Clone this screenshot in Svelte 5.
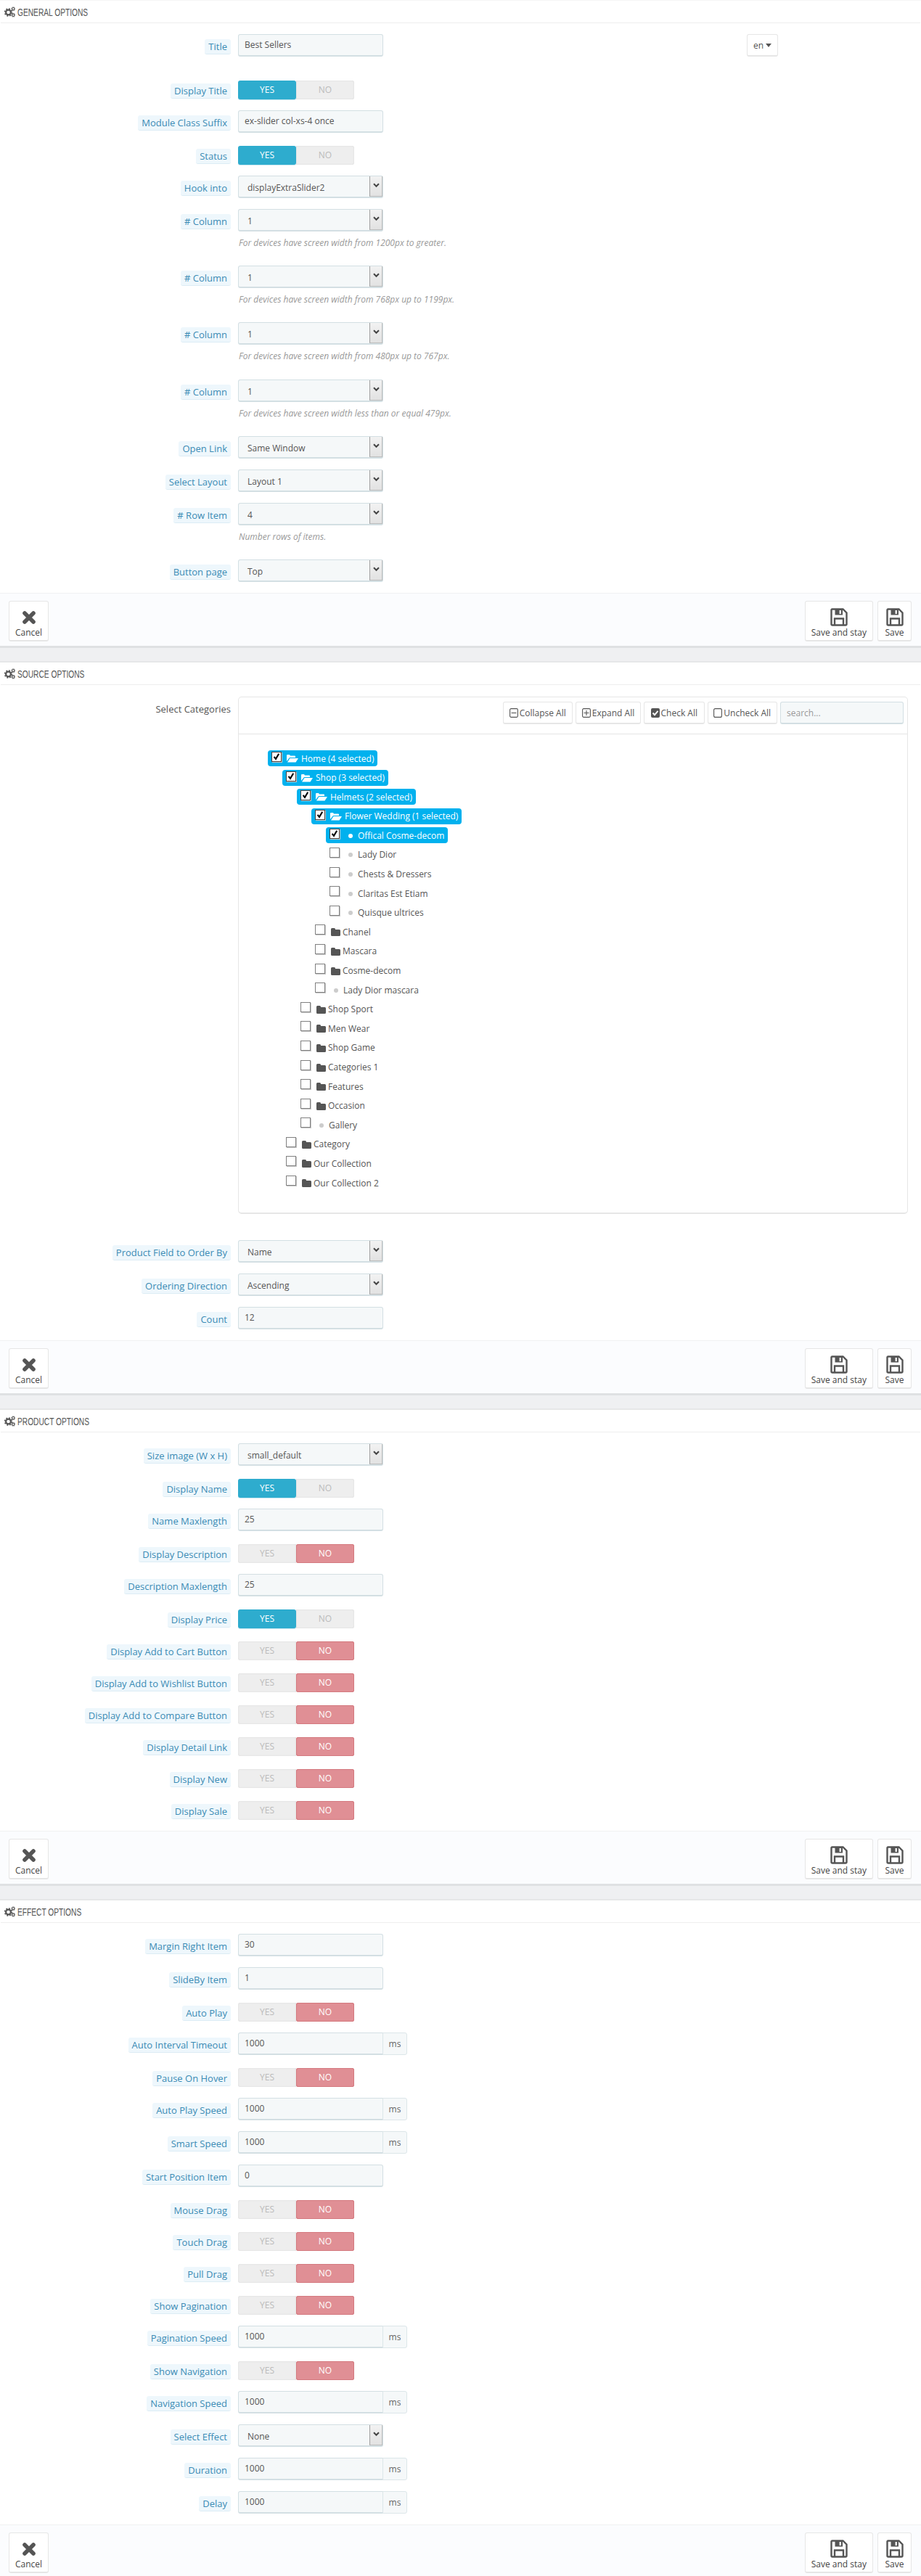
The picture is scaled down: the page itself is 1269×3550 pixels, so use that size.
<script>
  const general = [
    { t: 'input', label: 'Title', value: 'Best Sellers', cls: 'r-title', lang: true },
    { t: 'switch', label: 'Display Title', on: true },
    { t: 'input', label: 'Module Class Suffix', value: 'ex-slider col-xs-4 once' },
    { t: 'switch', label: 'Status', on: true },
    { t: 'select', label: 'Hook into', value: 'displayExtraSlider2' },
    { t: 'select', label: '# Column', value: '1', help: 'For devices have screen width from 1200px to greater.' },
    { t: 'select', label: '# Column', value: '1', help: 'For devices have screen width from 768px up to 1199px.' },
    { t: 'select', label: '# Column', value: '1', help: 'For devices have screen width from 480px up to 767px.' },
    { t: 'select', label: '# Column', value: '1', help: 'For devices have screen width less than or equal 479px.' },
    { t: 'select', label: 'Open Link', value: 'Same Window' },
    { t: 'select', label: 'Select Layout', value: 'Layout 1' },
    { t: 'select', label: '# Row Item', value: '4', help: 'Number rows of items.' },
    { t: 'select', label: 'Button page', value: 'Top' }
  ];
  const sourceAfter = [
    { t: 'select', label: 'Product Field to Order By', value: 'Name' },
    { t: 'select', label: 'Ordering Direction', value: 'Ascending' },
    { t: 'input', label: 'Count', value: '12' }
  ];
  const product = [
    { t: 'select', label: 'Size image (W x H)', value: 'small_default' },
    { t: 'switch', label: 'Display Name', on: true },
    { t: 'input', label: 'Name Maxlength', value: '25' },
    { t: 'switch', label: 'Display Description', on: false },
    { t: 'input', label: 'Description Maxlength', value: '25' },
    { t: 'switch', label: 'Display Price', on: true },
    { t: 'switch', label: 'Display Add to Cart Button', on: false },
    { t: 'switch', label: 'Display Add to Wishlist Button', on: false },
    { t: 'switch', label: 'Display Add to Compare Button', on: false },
    { t: 'switch', label: 'Display Detail Link', on: false },
    { t: 'switch', label: 'Display New', on: false },
    { t: 'switch', label: 'Display Sale', on: false }
  ];
  const effect = [
    { t: 'input', label: 'Margin Right Item', value: '30' },
    { t: 'input', label: 'SlideBy Item', value: '1' },
    { t: 'switch', label: 'Auto Play', on: false },
    { t: 'input', label: 'Auto Interval Timeout', value: '1000', unit: 'ms' },
    { t: 'switch', label: 'Pause On Hover', on: false },
    { t: 'input', label: 'Auto Play Speed', value: '1000', unit: 'ms' },
    { t: 'input', label: 'Smart Speed', value: '1000', unit: 'ms' },
    { t: 'input', label: 'Start Position Item', value: '0' },
    { t: 'switch', label: 'Mouse Drag', on: false },
    { t: 'switch', label: 'Touch Drag', on: false },
    { t: 'switch', label: 'Pull Drag', on: false },
    { t: 'switch', label: 'Show Pagination', on: false },
    { t: 'input', label: 'Pagination Speed', value: '1000', unit: 'ms' },
    { t: 'switch', label: 'Show Navigation', on: false },
    { t: 'input', label: 'Navigation Speed', value: '1000', unit: 'ms' },
    { t: 'select', label: 'Select Effect', value: 'None' },
    { t: 'input', label: 'Duration', value: '1000', unit: 'ms' },
    { t: 'input', label: 'Delay', value: '1000', unit: 'ms' }
  ];
  const tree = [
    { l: 0, n: 'Home (4 selected)', k: 'open', s: true },
    { l: 1, n: 'Shop (3 selected)', k: 'open', s: true },
    { l: 2, n: 'Helmets (2 selected)', k: 'open', s: true },
    { l: 3, n: 'Flower Wedding (1 selected)', k: 'open', s: true },
    { l: 4, n: 'Offical Cosme-decom', k: 'leaf', s: true },
    { l: 4, n: 'Lady Dior', k: 'leaf' },
    { l: 4, n: 'Chests & Dressers', k: 'leaf' },
    { l: 4, n: 'Claritas Est Etiam', k: 'leaf' },
    { l: 4, n: 'Quisque ultrices', k: 'leaf' },
    { l: 3, n: 'Chanel', k: 'folder' },
    { l: 3, n: 'Mascara', k: 'folder' },
    { l: 3, n: 'Cosme-decom', k: 'folder' },
    { l: 3, n: 'Lady Dior mascara', k: 'leaf' },
    { l: 2, n: 'Shop Sport', k: 'folder' },
    { l: 2, n: 'Men Wear', k: 'folder' },
    { l: 2, n: 'Shop Game', k: 'folder' },
    { l: 2, n: 'Categories 1', k: 'folder' },
    { l: 2, n: 'Features', k: 'folder' },
    { l: 2, n: 'Occasion', k: 'folder' },
    { l: 2, n: 'Gallery', k: 'leaf' },
    { l: 1, n: 'Category', k: 'folder' },
    { l: 1, n: 'Our Collection', k: 'folder' },
    { l: 1, n: 'Our Collection 2', k: 'folder' }
  ];
  const levelX = [0, 20, 40, 60, 80];
</script>

{#snippet cogs()}
  <svg class="cogs" viewBox="0 0 15 15" width="15" height="15" aria-hidden="true">
    <circle cx="5.5" cy="8" r="3.4" fill="none" stroke="#555" stroke-width="2.2" />
    <circle cx="5.5" cy="8" r="5" fill="none" stroke="#555" stroke-width="1.6" stroke-dasharray="2 1.93" />
    <circle cx="12.3" cy="3.2" r="1.7" fill="none" stroke="#555" stroke-width="1.2" />
    <circle cx="12.3" cy="3.2" r="2.6" fill="none" stroke="#555" stroke-width=".8" stroke-dasharray="1 1.04" />
    <circle cx="12.3" cy="11.8" r="1.7" fill="none" stroke="#555" stroke-width="1.2" />
    <circle cx="12.3" cy="11.8" r="2.6" fill="none" stroke="#555" stroke-width=".8" stroke-dasharray="1 1.04" />
  </svg>
{/snippet}

{#snippet floppy()}
  <svg viewBox="0 0 24 25" width="24" height="25" aria-hidden="true">
    <path d="M2.5 1.5H17.5L22.5 6.5V22a1.5 1.5 0 0 1-1.5 1.5H3A1.5 1.5 0 0 1 1.5 22V2.5a1 1 0 0 1 1-1z" fill="none" stroke="#555" stroke-width="2.4" />
    <path d="M6.5 1.5h10.5v8H6.5z" fill="#555" />
    <rect x="12.6" y="3" width="2.2" height="5" fill="#fff" />
    <path d="M6 23.5V14.5H18V23.5" fill="none" stroke="#555" stroke-width="2.4" />
  </svg>
{/snippet}

{#snippet heading(text)}
  <h3 class="head">{@render cogs()}<span class="ttl">{text}</span></h3>
{/snippet}

{#snippet row(r)}
  <div class="row r-{r.t} {r.cls ?? ''}" class:has-help={r.help}>
    <div class="lab"><span class="pill">{r.label}</span></div>
    <div class="ctl">
      {#if r.t === 'input'}
        <div class="line">
          <div class="field" class:joined={r.unit}>{r.value}</div>
          {#if r.unit}<div class="unit">{r.unit}</div>{/if}
          {#if r.lang}<div class="lang">en<i class="caret"></i></div>{/if}
        </div>
      {:else if r.t === 'switch'}
        <div class="switch">
          <span class="seg yes" class:active={r.on}>YES</span>
          <span class="seg no" class:active={!r.on}>NO</span>
        </div>
      {:else}
        <div class="select">
          <span class="val">{r.value}</span>
          <span class="arrow">
            <svg viewBox="0 0 9 7" width="9" height="7" aria-hidden="true"><path d="M1 1.2L4.5 4.8L8 1.2" fill="none" stroke="#444" stroke-width="2" /></svg>
          </span>
        </div>
      {/if}
      {#if r.help}<p class="help">{r.help}</p>{/if}
    </div>
  </div>
{/snippet}

{#snippet footer()}
  <div class="footer">
    <button class="act">
      <span class="ico">
        <svg viewBox="0 0 20 20" width="20" height="20" aria-hidden="true"><path d="M4 4L16 16M16 4L4 16" stroke="#555" stroke-width="5.6" stroke-linecap="round" /></svg>
      </span>
      <span>Cancel</span>
    </button>
    <div class="right">
      <button class="act"><span class="ico">{@render floppy()}</span><span>Save and stay</span></button>
      <button class="act save"><span class="ico">{@render floppy()}</span><span>Save</span></button>
    </div>
  </div>
{/snippet}

<div class="page">
  <section class="sec first">
    {@render heading('GENERAL OPTIONS')}
    <div class="body">
      {#each general as r}{@render row(r)}{/each}
    </div>
    {@render footer()}
  </section>

  <section class="sec">
    {@render heading('SOURCE OPTIONS')}
    <div class="body">
      <div class="row r-tree">
        <div class="lab"><span class="plain">Select Categories</span></div>
        <div class="tree">
          <div class="toolbar">
            <button class="tbtn w-collapse">
              <svg viewBox="0 0 12 13" width="12" height="13" aria-hidden="true"><rect x=".6" y=".6" width="10.8" height="11.8" rx="1.6" fill="none" stroke="#555" stroke-width="1.1" /><path d="M2.5 6.5h7" stroke="#555" stroke-width="1.1" /></svg>
              Collapse All
            </button>
            <button class="tbtn w-expand">
              <svg viewBox="0 0 12 13" width="12" height="13" aria-hidden="true"><rect x=".6" y=".6" width="10.8" height="11.8" rx="1.6" fill="none" stroke="#555" stroke-width="1.1" /><path d="M2.5 6.5h7M6 3v7" stroke="#555" stroke-width="1.1" /></svg>
              Expand All
            </button>
            <button class="tbtn w-check">
              <svg viewBox="0 0 12 13" width="12" height="13" aria-hidden="true"><rect width="12" height="13" rx="2" fill="#555" /><path d="M2.5 6.5L5 9.2L9.5 3.8" fill="none" stroke="#fff" stroke-width="1.9" /></svg>
              Check All
            </button>
            <button class="tbtn w-uncheck">
              <svg viewBox="0 0 12 13" width="12" height="13" aria-hidden="true"><rect x=".6" y=".6" width="10.8" height="11.8" rx="2" fill="none" stroke="#555" stroke-width="1.1" /></svg>
              Uncheck All
            </button>
            <div class="search">search...</div>
          </div>
          <ul class="nodes">
            {#each tree as n}
              <li>
                <div class="node" class:sel={n.s} style={`margin-left:${levelX[n.l]}px`}>
                  <span class="cb" class:on={n.s}>
                    {#if n.s}
                      <svg viewBox="0 0 12 12" width="12" height="12" aria-hidden="true"><path d="M2.6 5.8L5 8.8L9.2 1.8" fill="none" stroke="#000" stroke-width="2.1" /></svg>
                    {/if}
                  </span>
                  {#if n.k === 'open'}
                    <svg class="fi open" viewBox="0 0 16 12" width="16" height="12" aria-hidden="true"><path d="M0 10V2a1 1 0 0 1 1-1h3l1 1.5h6a1 1 0 0 1 1 1V5H4L0 10zM1 11.5L4.5 6H16L12.5 11.5z" fill="#fff" /></svg>
                  {:else if n.k === 'folder'}
                    <svg class="fi closed" viewBox="0 0 13 12" width="13" height="12" aria-hidden="true"><path d="M0 2.5A1.5 1.5 0 0 1 1.5 1h3A1.5 1.5 0 0 1 6 2.5V3h5.5A1.5 1.5 0 0 1 13 4.5v6A1.5 1.5 0 0 1 11.5 12h-10A1.5 1.5 0 0 1 0 10.5z" fill="#555" /></svg>
                  {:else}
                    <i class="dot"></i>
                  {/if}
                  <span class="nm">{n.n}</span>
                </div>
              </li>
            {/each}
          </ul>
        </div>
      </div>
      {#each sourceAfter as r}{@render row(r)}{/each}
    </div>
    {@render footer()}
  </section>

  <section class="sec">
    {@render heading('PRODUCT OPTIONS')}
    <div class="body">
      {#each product as r}{@render row(r)}{/each}
    </div>
    {@render footer()}
  </section>

  <section class="sec">
    {@render heading('EFFECT OPTIONS')}
    <div class="body">
      {#each effect as r}{@render row(r)}{/each}
    </div>
    {@render footer()}
  </section>
</div>

<style>
  :global(body) {
    margin: 0;
    background: #fff;
  }
  .page {
    height: 3550px;
    overflow: hidden;
    font-family: "Open Sans", "Liberation Sans", sans-serif;
    font-size: 12px;
    line-height: 17px;
    color: #555;
  }
  .sec {
    border-top: 2px solid #e6e7e8;
  }
  .sec.first {
    border-top: 1px solid #f5f5f5;
  }
  .head {
    height: 30px;
    margin: 0 1px;
    padding-left: 5px;
    display: flex;
    align-items: center;
    gap: 3px;
    border-bottom: 1px solid #eeeeee;
    font-family: "Liberation Sans", sans-serif;
    font-size: 15px;
    font-weight: 400;
    color: #555;
  }
  .ttl {
    display: inline-block;
    white-space: nowrap;
    transform: scaleX(0.68);
    transform-origin: left center;
  }
  .body {
    padding-top: 15px;
  }
  .sec:not(.first) .body {
    padding-top: 16px;
  }
  .sec:nth-child(n + 3) .body {
    padding-top: 15px;
  }
  .row {
    display: flex;
    gap: 10px;
  }
  .r-input,
  .r-select {
    height: 46px;
  }
  .r-switch {
    height: 44px;
  }
  .r-title {
    height: 60.75px;
  }
  .has-help {
    height: 78.25px;
  }
  .r-tree {
    height: 749px;
  }
  .lab {
    width: 318px;
    flex: none;
    display: flex;
    justify-content: flex-end;
    align-items: flex-start;
  }
  .pill {
    margin-top: 7px;
    padding: 1px 5px;
    height: 18px;
    border-bottom: 1px solid #dcecf5;
    border-radius: 3px;
    background: #eef7fc;
    color: #3a8bb5;
    font-size: 13px;
    line-height: 18px;
    white-space: nowrap;
  }
  .plain {
    margin-top: 8px;
    color: #555;
    font-size: 13px;
    line-height: 18px;
  }
  .ctl {
    flex: 1;
    min-width: 0;
  }
  .line {
    display: flex;
  }
  .field {
    box-sizing: border-box;
    width: 200px;
    height: 31px;
    padding: 0 8px;
    border: 1px solid #d3dfe3;
    border-bottom-width: 2px;
    border-radius: 3px;
    background: #f5f8f9;
    line-height: 28px;
    color: #555;
  }
  .field.joined {
    border-radius: 3px 0 0 3px;
  }
  .unit {
    box-sizing: border-box;
    width: 34px;
    height: 31px;
    margin-left: -1px;
    border: 1px solid #dce6e9;
    border-radius: 0 3px 3px 0;
    background: #f5f8f9;
    text-align: center;
    line-height: 29px;
    color: #666;
  }
  .lang {
    box-sizing: border-box;
    width: 43px;
    height: 31px;
    margin-left: 501px;
    padding-left: 8px;
    display: flex;
    align-items: center;
    gap: 3px;
    border: 1px solid #e6e6e6;
    border-bottom-width: 2px;
    border-radius: 3px;
    background: #fff;
  }
  .caret {
    width: 0;
    height: 0;
    border-left: 4px solid transparent;
    border-right: 4px solid transparent;
    border-top: 5px solid #555;
  }
  .switch {
    margin-top: 3px;
    width: 160px;
    height: 26px;
    display: flex;
  }
  .seg {
    flex: 1;
    text-align: center;
    line-height: 25px;
    background: #eee;
    color: #bbb;
    box-shadow: inset 0 0 2px #d4d4d4;
  }
  .seg.yes {
    border-radius: 3px 0 0 3px;
  }
  .seg.no {
    border-radius: 0 3px 3px 0;
  }
  .seg.yes.active {
    background: #2eacce;
    color: #fff;
    box-shadow: 0 1px 0 #c9e6ef;
    border-radius: 3px;
  }
  .seg.no.active {
    background: #e08f95;
    color: #fff;
    box-shadow: inset 0 0 0 1px #d4797f;
    border-radius: 3px;
  }
  .select {
    box-sizing: border-box;
    width: 200px;
    height: 31px;
    position: relative;
    padding: 0 0 0 12px;
    border: 1px solid #d3dfe3;
    border-bottom-width: 2px;
    border-radius: 3px;
    background: #f5f8f9;
    line-height: 31px;
    color: #555;
  }
  .arrow {
    position: absolute;
    top: 0;
    right: 0;
    bottom: 0;
    box-sizing: border-box;
    width: 18px;
    display: flex;
    justify-content: center;
    padding-top: 9px;
    border-left: 1px solid #a0a0a0;
    border-right: 1px solid #bdbdbd;
    border-bottom: 1px solid #bdbdbd;
    background: linear-gradient(#f2f2f2, #e2e2e2);
  }
  .arrow svg {
    display: block;
  }
  .help {
    margin: 7px 0 0 1px;
    font-style: italic;
    color: #999;
    white-space: nowrap;
  }
  .footer {
    box-sizing: border-box;
    height: 76px;
    padding: 10px 13px 0 12px;
    display: flex;
    justify-content: space-between;
    border-top: 1px solid #f0f1f2;
    border-bottom: 3px solid #dfe1e3;
    background: #fbfcfe;
    margin-bottom: 18px;
    box-shadow: 0 18px 0 #eff0f2;
  }
  .right {
    display: flex;
    gap: 6px;
  }
  .act {
    box-sizing: border-box;
    height: 56px;
    min-width: 47px;
    padding: 9px 8px 0;
    display: flex;
    flex-direction: column;
    align-items: center;
    border: 1px solid #e6e6e6;
    border-bottom-width: 2px;
    border-radius: 3px;
    background: #fff;
    font: inherit;
    line-height: 16px;
    color: #444;
  }
  .ico {
    height: 25px;
    display: flex;
    align-items: center;
    margin-bottom: 1px;
  }
  .tree {
    box-sizing: border-box;
    width: 923px;
    height: 713px;
    border: 1px solid #e6e6e6;
    border-bottom-width: 2px;
    border-radius: 5px;
    background: #fff;
  }
  .toolbar {
    box-sizing: border-box;
    height: 51px;
    padding: 6px 5px 0 0;
    display: flex;
    justify-content: flex-end;
    gap: 4px;
    border-bottom: 1px solid #e6e6e6;
  }
  .tbtn {
    box-sizing: border-box;
    height: 31px;
    padding: 0;
    display: flex;
    align-items: center;
    justify-content: center;
    gap: 2px;
    border: 1px solid #e6e6e6;
    border-bottom-width: 2px;
    border-radius: 3px;
    background: #fff;
    font: inherit;
    color: #555;
    white-space: nowrap;
  }
  .w-collapse {
    width: 96.5px;
  }
  .w-expand {
    width: 90px;
  }
  .w-check {
    width: 83.5px;
  }
  .w-uncheck {
    width: 96.5px;
  }
  .search {
    box-sizing: border-box;
    width: 170px;
    height: 31px;
    padding-left: 8px;
    border: 1px solid #d3dfe3;
    border-bottom-width: 2px;
    border-radius: 3px;
    background: #f5f8f9;
    line-height: 30px;
    color: #999;
  }
  .nodes {
    list-style: none;
    margin: 0;
    padding: 22px 0 0 40px;
  }
  .nodes li {
    height: 26.6px;
  }
  .node {
    display: inline-flex;
    align-items: center;
    height: 22px;
    padding: 0 5px;
    position: relative;
    white-space: nowrap;
    color: #555;
  }
  .node.sel {
    background: #01b1ee;
    border-radius: 4px;
    color: #fff;
  }
  .cb {
    box-sizing: border-box;
    flex: none;
    align-self: flex-start;
    width: 14px;
    height: 14px;
    margin-top: 1px;
    border: 1px solid #808080;
    box-shadow: 1px 1px 0 #c8c8c8;
    background: #fff;
    display: flex;
    align-items: center;
    justify-content: center;
  }
  .sel .cb {
    margin-top: 2px;
    border-color: #444;
  }
  .fi {
    flex: none;
  }
  .fi.open {
    margin: 0 4px 0 7px;
  }
  .fi.closed {
    margin: 0 3px 0 8px;
  }
  .dot {
    flex: none;
    width: 6px;
    height: 6px;
    margin: 1px 7px 0 12px;
    border-radius: 50%;
    background: #ccc;
  }
  .sel .dot {
    background: #fff;
  }
  .nm {
    display: block;
  }
</style>
